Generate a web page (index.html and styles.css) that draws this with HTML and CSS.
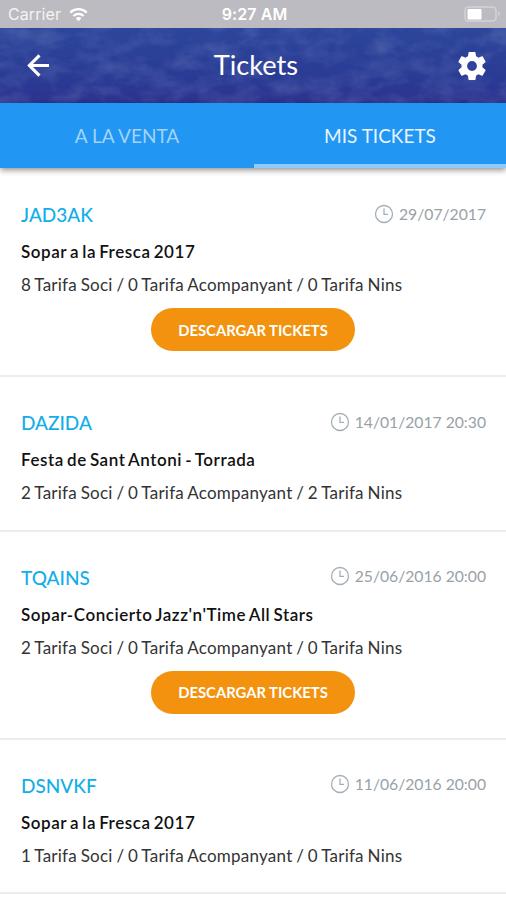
FILE: index.html
```html
<!DOCTYPE html>
<html lang="es">
<head>
<meta charset="utf-8">
<title>Tickets</title>
<link rel="stylesheet" href="styles.css">
</head>
<body>
<svg class="defs" width="0" height="0">
  <symbol id="clock" viewBox="0 0 20 20"><circle cx="10" cy="10" r="8.500"/><path d="M10 4.500V10.300H14"/></symbol>
</svg>
<div class="status">
  <div class="network">
    <span class="carrier">Carrier</span>
    <svg class="wifi" viewBox="0 0 18 14"><path class="arc" d="M1.200 5.200a11 11 0 0 1 15.600 0M4.200 8.400a6.800 6.800 0 0 1 9.600 0"/><path class="dot" d="M6.300 10.600a3.900 3.900 0 0 1 5.400 0L9 13.400z"/></svg>
  </div>
  <span class="time">9:27 AM</span>
  <svg class="battery" viewBox="0 0 37 16"><rect class="shell" x="1" y="1" width="31" height="14" rx="3.500"/><rect class="charge" x="3.500" y="3" width="14" height="10.500" rx="1"/><path class="dim" d="M34 5.500c2.500.8 2.500 4 0 4.800z"/></svg>
</div>
<header class="header">
  <svg class="scene" viewBox="0 0 506 74" preserveAspectRatio="none">
    <defs><filter id="grain" x="0" y="0" width="100%" height="100%"><feTurbulence type="fractalNoise" baseFrequency="0.035 0.060" numOctaves="4" seed="8"/><feColorMatrix values="0 0 0 0 0.4  0 0 0 0 0.47  0 0 0 0 0.75  1.600 0 0 0 -0.600"/></filter></defs>
    <rect width="506" height="74" filter="url(#grain)"/>
  </svg>
  <svg class="icon back" viewBox="0 0 24 24"><path d="M23 12H3.500M13 1.500L2.500 12l10.500 10.500"/></svg>
  <h1>Tickets</h1>
  <svg class="icon gear" viewBox="2 2 20 20"><path d="M19.430 12.980c.04-.32.07-.64.07-.98s-.03-.66-.07-.98l2.110-1.650c.19-.15.24-.42.12-.64l-2-3.460c-.12-.22-.39-.3-.61-.22l-2.490 1c-.52-.4-1.080-.73-1.690-.98l-.38-2.650A.49.49 0 0 0 14 2h-4c-.25 0-.46.18-.49.42l-.38 2.650c-.61.25-1.170.59-1.690.98l-2.490-1c-.23-.09-.49 0-.61.22l-2 3.460c-.13.22-.07.49.12.64l2.110 1.650c-.04.32-.07.65-.07.98s.03.66.07.98l-2.110 1.650c-.19.15-.24.42-.12.64l2 3.460c.12.22.39.3.61.22l2.490-1c.52.4 1.080.73 1.690.98l.38 2.650c.03.24.24.42.49.42h4c.25 0 .46-.18.49-.42l.38-2.650c.61-.25 1.170-.59 1.690-.98l2.490 1c.23.09.49 0 .61-.22l2-3.460c.12-.22.07-.49-.12-.64zM12 15.500a3.500 3.500 0 1 1 0-7 3.500 3.500 0 0 1 0 7z"/></svg>
</header>
<nav class="tabs">
  <div class="tab"><span>A LA VENTA</span></div>
  <div class="tab active"><span>MIS TICKETS</span></div>
</nav>
<main>
  <article class="card with-button">
    <div class="top"><span class="code">JAD3AK</span><span class="date"><svg><use href="#clock"/></svg><span>29/07/2017</span></span></div>
    <h2>Sopar a la Fresca 2017</h2>
    <p>8 Tarifa Soci / 0 Tarifa Acompanyant / 0 Tarifa Nins</p>
    <button>DESCARGAR TICKETS</button>
  </article>
  <article class="card">
    <div class="top"><span class="code">DAZIDA</span><span class="date"><svg><use href="#clock"/></svg><span>14/01/2017 20:30</span></span></div>
    <h2>Festa de Sant Antoni - Torrada</h2>
    <p>2 Tarifa Soci / 0 Tarifa Acompanyant / 2 Tarifa Nins</p>
  </article>
  <article class="card with-button">
    <div class="top"><span class="code">TQAINS</span><span class="date"><svg><use href="#clock"/></svg><span>25/06/2016 20:00</span></span></div>
    <h2>Sopar-Concierto Jazz'n'Time All Stars</h2>
    <p>2 Tarifa Soci / 0 Tarifa Acompanyant / 0 Tarifa Nins</p>
    <button>DESCARGAR TICKETS</button>
  </article>
  <article class="card">
    <div class="top"><span class="code">DSNVKF</span><span class="date"><svg><use href="#clock"/></svg><span>11/06/2016 20:00</span></span></div>
    <h2>Sopar a la Fresca 2017</h2>
    <p>1 Tarifa Soci / 0 Tarifa Acompanyant / 0 Tarifa Nins</p>
  </article>
</main>
</body>
</html>
```
FILE: styles.css
```css
* { box-sizing: border-box; }
body { margin: 0; height: 900px; overflow: hidden; background: #fff; font-family: Lato, "Liberation Sans", sans-serif; }
.defs { position: absolute; }
.status { display: grid; grid-template-columns: 1fr auto 1fr; align-items: center; height: 28px; padding: 0 5px 0 8px; background: #bcbbc1; color: #fff; font-family: Inter, "Liberation Sans", sans-serif; font-size: 16px; line-height: 28px; }
.network { display: flex; align-items: center; gap: 8px; }
.carrier { color: #f4f4f5; letter-spacing: .1px; }
.wifi { width: 19px; height: 15px; }
.wifi .arc { fill: none; stroke: #fff; stroke-width: 2.200; }
.wifi .dot { fill: #fff; }
.time { font-weight: 600; letter-spacing: .1px; white-space: nowrap; }
.battery { width: 37px; height: 16px; justify-self: end; }
.shell { fill: none; stroke: #d3d3d7; stroke-width: 1.500; }
.charge { fill: #fff; }
.dim { fill: #d3d3d7; }
.header { position: relative; display: flex; align-items: center; justify-content: space-between; height: 75px; padding: 0 20px 0 27px; background: linear-gradient(#2c469b, #2a3a94 70%, #2d338f); color: #fff; }
.scene { position: absolute; inset: 0; width: 100%; height: 100%; opacity: .25; }
.icon { position: relative; }
.back { width: 23px; height: 23px; fill: none; stroke: #fff; stroke-width: 3.200; }
.gear { width: 28px; height: 28px; fill: #fff; }
h1 { position: relative; left: 2px; margin: 0; font-size: 27.200px; font-weight: 400; line-height: 34px; top: -1px; }
.tabs { position: relative; display: grid; grid-template-columns: 254px 1fr; height: 65px; background: #2196f3; box-shadow: 0 2px 6px rgba(0,0,0,.45); color: #a3d3fa; }
.tab { display: flex; align-items: center; justify-content: center; font-size: 19px; border-bottom: 4px solid transparent; padding-top: 4px; }
.tab.active { color: #e8f4fe; border-color: #90caf9; }
main { padding-top: 1px; }
.card { display: flex; flex-direction: column; height: 154.300px; padding: 31px 20px 0 21px; border-bottom: 2px solid #ececee; }
.card.with-button { height: 208.300px; }
.top { display: flex; justify-content: space-between; height: 30px; margin-bottom: 5px; line-height: 30px; }
.code { color: #12aee8; font-size: 19px; font-weight: 500; }
.date { display: flex; align-items: center; gap: 5px; height: 27px; color: #98a1a8; font-size: 15.700px; }
.date svg { width: 20px; height: 20px; fill: none; stroke: #a3afb7; stroke-width: 1.300; }
h2 { margin: 0; color: #111; font-size: 17px; font-weight: 600; line-height: 33px; letter-spacing: .55px; word-spacing: -1.600px; }
p { margin: 0; color: #333; font-size: 17px; line-height: 33px; letter-spacing: .25px; word-spacing: -.9px; }
button { align-self: center; width: 204px; height: 43px; margin: 7px 1px 0 0; padding: 0; border: 0; border-radius: 22px; background: #f2920f; color: #fff; font: 700 14.800px Lato, "Liberation Sans", sans-serif; }
```
